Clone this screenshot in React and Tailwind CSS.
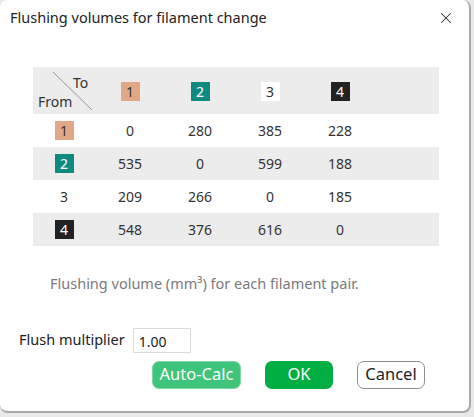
import { X } from "lucide-react";

const colors = {
  1: "bg-[#e2a886] text-[#333]",
  2: "bg-[#0f8a80] text-white",
  3: "bg-white text-[#333]",
  4: "bg-[#222222] text-white",
};

const rows = [
  [0, 280, 385, 228],
  [535, 0, 599, 188],
  [209, 266, 0, 185],
  [548, 376, 616, 0],
];

function Badge({ n }) {
  return (
    <span className={`inline-flex h-[19px] w-[19px] items-center justify-center text-[14px] ${colors[n]}`}>
      {n}
    </span>
  );
}

export default function App() {
  return (
    <div className="h-[417px] w-[474px] bg-[#e9e9e9]" style={{ fontFamily: '"Noto Sans", "Open Sans", sans-serif' }}>
      <div className="relative h-[413px] w-[471px] rounded-lg border-r-2 border-b-2 border-[#a8a8a8] bg-white">
        <div className="flex h-[34px] items-center justify-between pl-[10px] pr-[14px] pt-[1px]">
          <span className="text-[14.5px] text-[#222]">Flushing volumes for filament change</span>
          <X size={18} strokeWidth={1.4} className="text-[#333]" />
        </div>

        <div className="ml-[33px] mt-[33px] w-[406px] text-[14px] text-[#333]">
          <div className="flex h-[47px] items-center bg-[#ececec]">
            <div className="relative h-full w-[62px]">
              <svg className="absolute left-0 top-0" width="62" height="47">
                <line x1="20" y1="5" x2="59" y2="43" stroke="#9a9a9a" strokeWidth="1" />
              </svg>
              <span className="absolute left-[40px] top-[5px]">To</span>
              <span className="absolute left-[5px] top-[24px]">From</span>
            </div>
            {[1, 2, 3, 4].map((n) => (
              <div key={n} className="flex w-[70px] justify-center pt-[2px]">
                <Badge n={n} />
              </div>
            ))}
          </div>
          {rows.map((r, i) => (
            <div key={i} className={`flex h-[33px] items-center ${i % 2 ? "bg-[#ececec]" : "bg-white"}`}>
              <div className="flex w-[62px] justify-center">
                <Badge n={i + 1} />
              </div>
              {r.map((v, j) => (
                <div key={j} className="w-[70px] text-center">
                  {v}
                </div>
              ))}
            </div>
          ))}
        </div>

        <div className="ml-[50px] mt-[27px] text-[14.5px] text-[#7a7a7a]">
          Flushing volume (mm³) for each filament pair.
        </div>

        <div className="ml-[19px] mt-[33px] flex items-center gap-[8px]">
          <span className="text-[14.5px] text-[#222]">Flush multiplier</span>
          <div className="flex h-[25px] w-[58px] items-center border border-[#dcdcdc] pl-[5px] pt-[2px] text-[14px] text-[#222]">
            1.00
          </div>
        </div>

        <div className="mt-[8px] flex justify-end gap-[24px] pr-[44px] text-[16.5px]">
          <button className="flex h-[28px] w-[89px] items-center justify-center rounded-[7px] border border-[#7fd6a4] bg-[#3ec47b] text-white">
            Auto-Calc
          </button>
          <button className="flex h-[28px] w-[68px] items-center justify-center rounded-[7px] bg-[#00ae42] text-white">
            OK
          </button>
          <button className="flex h-[28px] w-[68px] items-center justify-center rounded-[7px] border border-[#909090] bg-white text-[#222]">
            Cancel
          </button>
        </div>
      </div>
    </div>
  );
}
